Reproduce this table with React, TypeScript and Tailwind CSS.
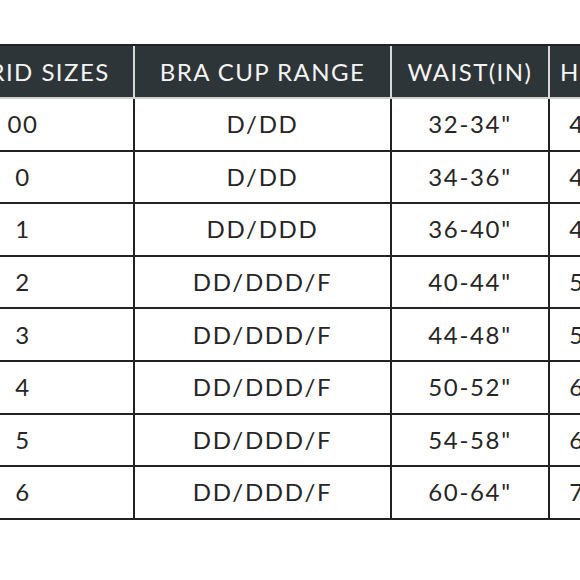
import React from 'react';

const rows = [
    ['00', 'D/DD', '32-34"', '42-44"'],
    ['0', 'D/DD', '34-36"', '44-46"'],
    ['1', 'DD/DDD', '36-40"', '46-50"'],
    ['2', 'DD/DDD/F', '40-44"', '50-54"'],
    ['3', 'DD/DDD/F', '44-48"', '54-58"'],
    ['4', 'DD/DDD/F', '50-52"', '60-62"'],
    ['5', 'DD/DDD/F', '54-58"', '64-68"'],
    ['6', 'DD/DDD/F', '60-64"', '72-76"'],
];

const widths = ['w-[222px]', 'w-[257px]', 'w-[158px]', 'w-[124px]'];

export default function App() {
    return (
        <div
            className="w-[580px] h-[580px] bg-white overflow-hidden pt-[44px]"
            style={{ fontFamily: 'Lato, "Open Sans", sans-serif' }}
        >
            <div className="ml-[-87px] w-max">
                {/* header */}
                <div className="flex h-[55px] bg-[#2e3538] border-t-2 border-b-2 border-t-[#222] border-b-[#cfcfcf]">
                    {['HYBRID SIZES', 'BRA CUP RANGE', 'WAIST(IN)', 'HIPS(IN)'].map((h, i) => (
                        <div
                            key={h}
                            className={`${widths[i]} shrink-0 flex items-center justify-center whitespace-nowrap border-r-2 border-[#d8d8d8] text-[24px] tracking-[0.06em] text-[#f4f4f4]`}
                        >
                            {h}
                        </div>
                    ))}
                </div>

                {rows.map((r, ri) => (
                    <div key={ri} className="flex h-[52.6px] border-b-2 border-[#222]">
                        {r.map((c, ci) => (
                            <div
                                key={ci}
                                className={`${widths[ci]} shrink-0 flex items-center justify-center whitespace-nowrap border-r-2 border-[#222] text-[24px] tracking-[0.07em] text-[#262626]`}
                            >
                                {c}
                            </div>
                        ))}
                    </div>
                ))}
            </div>
        </div>
    );
}
